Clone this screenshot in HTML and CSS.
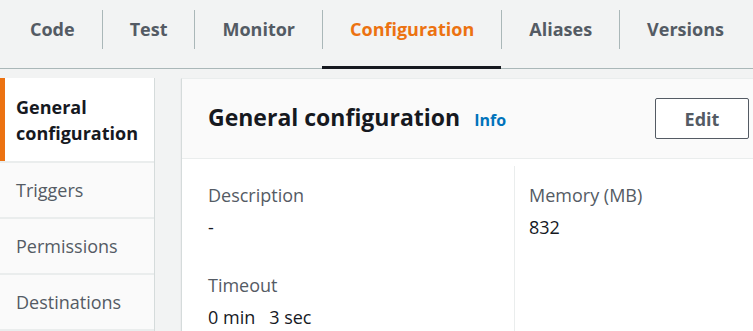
FILE: index.html
```html
<!DOCTYPE html>
<html lang="en">
<head>
    <meta charset="UTF-8">
    <meta name="viewport" content="width=device-width, initial-scale=1.0">
    <title>Function configuration</title>
    <link rel="stylesheet" href="styles.css">
</head>
<body>

    <nav class="tabs">
        <a class="tab"><span class="tab-label">Code</span></a>
        <a class="tab"><span class="tab-label">Test</span></a>
        <a class="tab"><span class="tab-label">Monitor</span></a>
        <a class="tab active"><span class="tab-label">Configuration</span></a>
        <a class="tab"><span class="tab-label">Aliases</span></a>
        <a class="tab"><span class="tab-label">Versions</span></a>
    </nav>

    <div class="layout">
        <ul class="side-nav">
            <li class="side-item active">General configuration</li>
            <li class="side-item">Triggers</li>
            <li class="side-item">Permissions</li>
            <li class="side-item">Destinations</li>
        </ul>

        <section class="panel">
            <header class="panel-header">
                <h2>General configuration <a class="info">Info</a></h2>
                <button type="button" class="btn">Edit</button>
            </header>

            <div class="panel-body">
                <div class="column">
                    <div class="field">
                        <div class="field-label">Description</div>
                        <div class="field-value">-</div>
                    </div>
                    <div class="field">
                        <div class="field-label">Timeout</div>
                        <div class="field-value">
                            <span class="unit">0 min</span>
                            <span class="unit">3 sec</span>
                        </div>
                    </div>
                </div>
                <div class="column">
                    <div class="field">
                        <div class="field-label">Memory (MB)</div>
                        <div class="field-value">832</div>
                    </div>
                </div>
            </div>
        </section>
    </div>

</body>
</html>
```

FILE: styles.css
```css
body {
    margin: 0;
    font-family: "Open Sans", Arial, sans-serif;
    font-size: 18px;
    color: #16191f;
    background-color: #f2f3f3;
    overflow: hidden;
}

/* top tabs */
.tabs {
    display: flex;
    height: 69px;
    box-sizing: border-box;
    border-bottom: 1px solid #aab7b8;
}

.tab {
    box-sizing: border-box;
    height: 69px;
    padding-top: 10px;
    border-bottom: 3px solid transparent;
    margin-bottom: -1px;
    color: #545b64;
    font-weight: bold;
    cursor: pointer;
}

.tab-label {
    display: block;
    padding: 0 27px;
    line-height: 39px;
}

.tab:first-child .tab-label {
    padding-left: 30px;
}

.tab + .tab .tab-label {
    border-left: 1px solid #aab7b8;
}

.tab.active {
    color: #ec7211;
    border-bottom-color: #16191f;
}

/* content */
.layout {
    display: flex;
    gap: 26px;
    margin-top: 9px;
}

.side-nav {
    list-style: none;
    margin: 0;
    padding: 0;
    flex: 0 0 154px;
    border-right: 1px solid #d5dbdb;
    background-color: #fafafa;
}

.side-item {
    padding: 14px 10px 14px 16px;
    line-height: 26px;
    color: #545b64;
    border-bottom: 2px solid #eaeded;
}

.side-item.active {
    padding-top: 16px;
    padding-bottom: 15px;
    background-color: white;
    color: #16191f;
    font-weight: bold;
    box-shadow: inset 5px 0 0 #ec7211;
}

.panel {
    flex: 0 0 590px;
    background-color: white;
    border-left: 1px solid #d5dbdb;
    border-top: 1px solid #eaeded;
    box-shadow: 0 1px 1px rgba(0, 31, 63, 0.15);
}

.panel-header {
    display: flex;
    align-items: center;
    justify-content: space-between;
    height: 80px;
    box-sizing: border-box;
    padding: 0 23px 0 26px;
    background-color: #fafafa;
    border-bottom: 1px solid #eaeded;
}

.panel-header h2 {
    margin: 0;
    font-size: 23px;
    line-height: 30px;
}

.info {
    margin-left: 8px;
    font-size: 16px;
    color: #0073bb;
    cursor: pointer;
}

.btn {
    width: 94px;
    height: 41px;
    font-family: inherit;
    font-size: 18px;
    font-weight: bold;
    color: #545b64;
    background-color: white;
    border: 1px solid #545b64;
    border-radius: 2px;
    cursor: pointer;
}

.panel-body {
    display: flex;
    padding-top: 7px;
}

.column {
    padding: 16px 20px 0 26px;
}

.column:first-child {
    flex: 0 0 286px;
    border-right: 1px solid #eaeded;
}

.column + .column {
    padding-left: 14px;
}

.field {
    margin-bottom: 32px;
}

.field-label {
    line-height: 26px;
    color: #545b64;
    margin-bottom: 6px;
}

.field-value {
    display: flex;
    gap: 14px;
    line-height: 26px;
}
```
